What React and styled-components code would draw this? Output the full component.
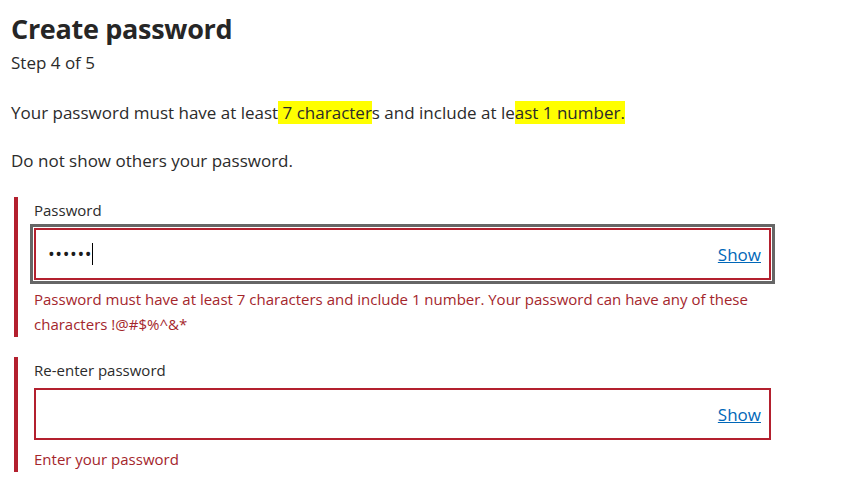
import React from "react";
import styled, { createGlobalStyle } from "styled-components";

const GlobalStyle = createGlobalStyle`
  body {
    margin: 0;
    background: #ffffff;
    font-family: "Open Sans", "Noto Sans", sans-serif;
    color: #2b2b2b;
  }
`;

const Page = styled.div`
  padding: 11px 0 0 11px;
`;

const Title = styled.h1`
  margin: 0;
  font-size: 27px;
  line-height: 36px;
  font-weight: 700;
  letter-spacing: -0.3px;
  color: #262626;
`;

const Step = styled.div`
  margin-top: 5px;
  font-size: 17px;
  line-height: 22px;
`;

const Para = styled.p`
  margin: ${(p) => p.$top}px 0 0;
  font-size: 17px;
  line-height: 22px;
`;

const Mark = styled.span`
  background: #ffff00;
`;

const Group = styled.div`
  margin: ${(p) => p.$top}px 0 0 3px;
  border-left: 4px solid #b3202e;
  padding: 3px 0 0 16px;
`;

const Label = styled.div`
  font-size: 15px;
  line-height: 20px;
  color: #2b2b2b;
`;

const Field = styled.div`
  margin-top: 8px;
  width: 737px;
  height: 52px;
  box-sizing: border-box;
  border: 2px solid #b3202e;
  display: flex;
  align-items: center;
  padding: 0 8px 0 12px;
  outline: ${(p) => (p.$focused ? "3px solid #666666" : "none")};
  outline-offset: 1px;
`;

const Dots = styled.span`
  font-size: 18px;
  letter-spacing: 0.6px;
  color: #1b1b1b;
`;

const Caret = styled.span`
  width: 1px;
  height: 22px;
  background: #000000;
`;

const ShowLink = styled.a`
  margin-left: auto;
  font-size: 17px;
  color: #0067b8;
  text-decoration: underline;
  cursor: pointer;
`;

const ErrorText = styled.div`
  margin-top: 7px;
  font-size: 15px;
  line-height: 25px;
  color: #a4262c;
  width: 740px;
`;

function PasswordField({ label, value, focused, error, top }) {
  return (
    <Group $top={top}>
      <Label>{label}</Label>
      <Field $focused={focused}>
        {value && <Dots>{value}</Dots>}
        {focused && <Caret />}
        <ShowLink>Show</ShowLink>
      </Field>
      <ErrorText>{error}</ErrorText>
    </Group>
  );
}

export default function App() {
  return (
    <Page>
      <GlobalStyle />
      <Title>Create password</Title>
      <Step>Step 4 of 5</Step>
      <Para $top={28}>
        Your password must have at least<Mark> 7 character</Mark>s and include
        at le<Mark>ast 1 number.</Mark>
      </Para>
      <Para $top={26}>Do not show others your password.</Para>
      <PasswordField
        top={25}
        label="Password"
        value="••••••"
        focused
        error="Password must have at least 7 characters and include 1 number. Your password can have any of these characters !@#$%^&*"
      />
      <PasswordField
        top={20}
        label="Re-enter password"
        error="Enter your password"
      />
    </Page>
  );
}
